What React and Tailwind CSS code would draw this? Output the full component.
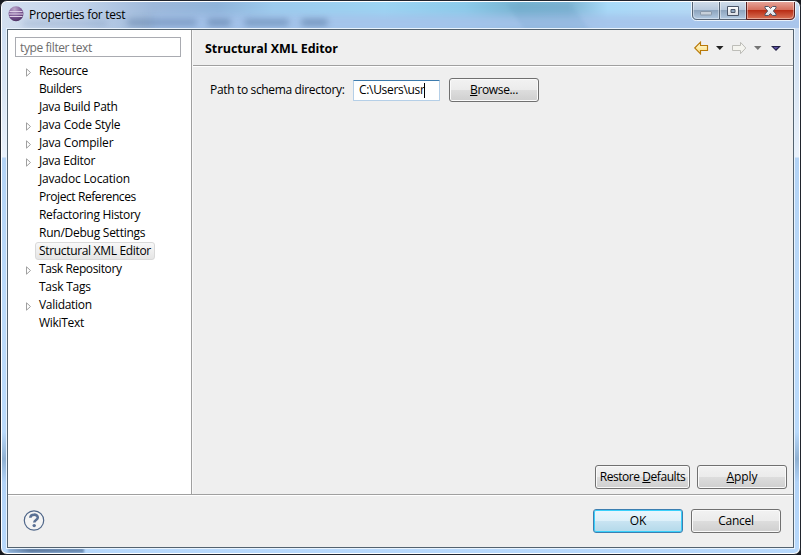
import React from "react";

const treeItems = [
  { label: "Resource", expandable: true, tracking: "tracking-[-0.38px]" },
  { label: "Builders", tracking: "tracking-[-0.4px]" },
  { label: "Java Build Path", tracking: "tracking-[-0.28px]" },
  { label: "Java Code Style", expandable: true, tracking: "tracking-[-0.2px]" },
  { label: "Java Compiler", expandable: true, tracking: "tracking-[-0.17px]" },
  { label: "Java Editor", expandable: true, tracking: "tracking-[-0.28px]" },
  { label: "Javadoc Location", tracking: "tracking-[-0.18px]" },
  { label: "Project References", tracking: "tracking-[-0.42px]" },
  { label: "Refactoring History", tracking: "tracking-[-0.3px]" },
  { label: "Run/Debug Settings", tracking: "tracking-[-0.25px]" },
  { label: "Structural XML Editor", selected: true, tracking: "tracking-[-0.33px]" },
  { label: "Task Repository", expandable: true, tracking: "tracking-[-0.38px]" },
  { label: "Task Tags", tracking: "tracking-[-0.25px]" },
  { label: "Validation", expandable: true, tracking: "tracking-[-0.3px]" },
  { label: "WikiText", tracking: "tracking-[-0.3px]" },
];

function TreeItem({ label, expandable, selected, tracking }) {
  return (
    <li className="flex h-[18px] items-center">
      <span className="flex w-[27px] shrink-0 items-center pl-[17px]">
        {expandable && (
          <svg width="7" height="9" viewBox="0 0 7 9" className="mt-[2px] shrink-0">
            <path d="M1.500 .8v7.400L5.500 4.500z" fill="#fff" stroke="#a0a0a0" />
          </svg>
        )}
      </span>
      <span
        className={
          "flex h-[18px] items-center rounded-[3px] border px-[3px] leading-none whitespace-nowrap " +
          tracking +
          (selected
            ? " w-[120px] border-[#d9d9d9] bg-linear-to-b from-[#f8f8f8] to-[#e5e5e5]"
            : " border-transparent")
        }
      >
        {label}
      </span>
    </li>
  );
}

function Button({ className, primary, children }) {
  return (
    <button
      className={
        "flex h-6 items-center justify-center rounded-[3px] border text-[12px] leading-none whitespace-nowrap " +
        (primary
          ? "border-[#3c7fb1] bg-[linear-gradient(#eaf6fd_0%,#ddf0f9_49%,#c9e4f2_50%,#b3d9ea_100%)] shadow-[inset_0_0_0_1px_#39d0fb] "
          : "border-[#707070] bg-[linear-gradient(#f2f2f2_0%,#ebebeb_49%,#dddddd_50%,#cfcfcf_100%)] shadow-[inset_0_0_0_1px_#fafafa] ") +
        className
      }
    >
      <span>{children}</span>
    </button>
  );
}

function EclipseLogo() {
  return (
    <svg width="16" height="16" viewBox="0 0 16 16">
      <defs>
        <radialGradient id="orb" cx=".4" cy=".2" r=".85">
          <stop offset="0" stopColor="#bba8cb" />
          <stop offset=".6" stopColor="#775390" />
          <stop offset="1" stopColor="#49305f" />
        </radialGradient>
      </defs>
      <circle cx="8" cy="7.800" r="7.500" fill="url(#orb)" />
      <path d="M1.500 5.500h13M.8 8h14.400M1.500 10.500h13" stroke="#ddd0e6" strokeWidth="1" />
    </svg>
  );
}

function TitleBar() {
  return (
    <header className="relative flex h-[26px] shrink-0 justify-between overflow-hidden bg-[linear-gradient(90deg,#d3dfef_0%,#c0d2ea_10%,#9db8da_19%,#8fb4da_27%,#9ccbed_34%,#9cd4f3_48%,#8ccbea_58%,#76b3d0_65%,#7db4d3_71%,#a8daf8_76%,#b3dcf7_84%,#c3d8f0_100%)]">
      <div className="absolute top-[13px] left-[150px] h-[18px] w-[660px] bg-[#a5c2ea]/90 blur-[4px]" />
      <div className="absolute top-[2px] left-[515px] h-[30px] w-[65px] skew-x-[35deg] bg-[#5f91bb]/15 blur-[2px]" />
      <div className="absolute top-[18px] left-[20px] h-[7px] w-[85px] rounded-full bg-[#486a94]/20 blur-[3px]" />
      <div className="absolute top-[17px] left-[125px] h-[7px] w-[70px] rounded-full bg-[#486a94]/40 blur-[3px]" />
      <div className="absolute top-[17px] left-[205px] h-[7px] w-[24px] rounded-full bg-[#486a94]/50 blur-[3px]" />
      <div className="absolute top-[17px] left-[242px] h-[7px] w-[45px] rounded-full bg-[#486a94]/45 blur-[3px]" />
      <div className="absolute top-[17px] left-[299px] h-[7px] w-[27px] rounded-full bg-[#486a94]/50 blur-[3px]" />
      <div className="relative flex items-start pl-[6px]">
        <div className="mt-[4px]">
          <EclipseLogo />
        </div>
        <h1 className="mt-[7px] ml-[5px] text-[12px] leading-[12px] tracking-[-0.28px]">Properties for test</h1>
      </div>
      <svg width="105" height="20" viewBox="0 0 105 20" className="relative -mt-px mr-[3px] shrink-0">
        <defs>
          <linearGradient id="glass" x2="0" y2="1">
            <stop offset="0" stopColor="#d2deeb" />
            <stop offset=".48" stopColor="#b7c8dc" />
            <stop offset=".5" stopColor="#8da4bd" />
            <stop offset="1" stopColor="#b4cbe3" />
          </linearGradient>
          <linearGradient id="close" x2="0" y2="1">
            <stop offset="0" stopColor="#e8aaa0" />
            <stop offset=".48" stopColor="#d56e5c" />
            <stop offset=".5" stopColor="#b92c14" />
            <stop offset="1" stopColor="#db765a" />
          </linearGradient>
          <linearGradient id="glyph" x2="0" y2="1">
            <stop offset="0" stopColor="#fff" />
            <stop offset="1" stopColor="#d8dce2" />
          </linearGradient>
        </defs>
        <path d="M.5 0v14q0 5.500 5 5.500h94q5 0 5-5.500V0" fill="none" stroke="#e9f2fb" />
        <path d="M1.500 0h27v18.500H6q-4.500 0-4.500-4.500z" fill="url(#glass)" stroke="#566475" />
        <path d="M28.500 0h27v18.500h-27z" fill="url(#glass)" stroke="#566475" />
        <path d="M55.500 0h48v14q0 4.500-4.500 4.500H55.500z" fill="url(#close)" stroke="#5a2020" />
        <path d="M2.500 1v13q0 3.500 3.500 3.500h21.500V1M29.500 1v16.500h25V1M56.500 1v16.500h42q4 0 4-3.500V1" fill="none" stroke="#fff" opacity=".4" />
        <rect x="9.500" y="10.500" width="11" height="3.500" rx=".5" fill="#c7d0da" stroke="#8998a9" />
        <path fillRule="evenodd" d="M36.500 5.500h11v9h-11zM40 8.500h4v3h-4z" fill="url(#glyph)" stroke="#4b5669" />
        <path d="M74.500 5.500h3.500l2 2 2-2h3.500v1.500l-2.700 3 2.700 3v1.500H82l-2-2-2 2h-3.500V13l2.700-3-2.700-3z" transform="translate(-.5)" fill="url(#glyph)" stroke="#535666" />
      </svg>
    </header>
  );
}

function ToolbarIcons() {
  return (
    <svg width="90" height="14" viewBox="0 0 90 14">
      <defs>
        <linearGradient id="gold" x2="0" y2="1">
          <stop offset="0" stopColor="#fffbe0" />
          <stop offset="1" stopColor="#fbdc75" />
        </linearGradient>
      </defs>
      <path d="M.7 7 6.500 1.200V4.500h7v5h-7v3.300z" fill="url(#gold)" stroke="#b87908" strokeWidth="1.150" />
      <path d="M22 5h7.500l-3.700 4z" fill="#222" />
      <path d="M51.800 7 46.500 1.300V4.500h-8v5h8v3.200z" fill="#f4f4ef" stroke="#bdbdb8" />
      <path d="M60 5h7.500l-3.700 4z" fill="#747474" />
      <path d="M77 5h10l-5 5z" fill="#222044" />
      <path d="M79.500 6h5l-3 2.500z" fill="#5b50a2" />
    </svg>
  );
}

function HelpIcon() {
  return (
    <svg width="22" height="22" viewBox="0 0 22 22">
      <circle cx="11" cy="10.500" r="9.700" fill="#f4f4f4" stroke="#4f6689" strokeWidth="1.200" />
      <path d="M7.300 7.700C7.500 3.700 14.800 3.700 14.800 7.500c0 2.500-3.500 2.600-3.500 5" fill="none" stroke="#5a7094" strokeWidth="2.600" />
      <circle cx="11.200" cy="15.600" r="1.700" fill="#5a7094" />
    </svg>
  );
}

export default function App() {
  return (
    <div className="h-[555px] w-[801px] overflow-hidden bg-[#17191f] font-['Open_Sans','Noto_Sans',sans-serif] text-[12px] text-black">
      <div className="h-full w-full rounded-[7px] border border-[#20242d] bg-white p-px">
        <div className="relative flex h-full w-full flex-col overflow-hidden rounded-[5px] bg-[linear-gradient(#c9dbf2_0px,#dae6f4_90px,#e9f1fb_155px,#b3d3f5_156px,#bbdafa_300px,#badafb_430px,#8fb0d2_457px,#b2d3f7_480px,#b8d9fc_551px)]">
          <div className="absolute bottom-0 left-[6px] h-[5px] w-[76px] bg-linear-to-r from-[#8eaed3] via-[#5f7ba0] via-30% to-[#6c8cb3] blur-[1px]" />
          <TitleBar />
          <div className="relative flex h-[521px] shrink-0 px-[4px]">
            <div className="flex w-full flex-col border border-[#e9f3fd]">
              <div className="flex h-[519px] w-full flex-col border border-[#53626f] bg-[#efefef]">
                <div className="flex h-[464px] shrink-0">
                  <nav className="w-[184px] shrink-0 border-r border-[#a0a0a0] bg-white">
                    <input
                      readOnly
                      placeholder="type filter text"
                      className="mt-[7px] ml-[7px] block h-[20px] w-[166px] border border-[#a9abb1] px-[4px] text-[12px] tracking-[-0.4px] outline-none placeholder:text-[#6d6d6d]"
                    />
                    <ul className="mt-[5px]">
                      {treeItems.map((item) => (
                        <TreeItem key={item.label} {...item} />
                      ))}
                    </ul>
                  </nav>
                  <main className="flex min-w-0 flex-1 flex-col border-l border-[#f8f8f8]">
                    <div className="flex h-[36px] shrink-0 items-center justify-between border-b border-[#a0a0a0] pr-[9px] pl-[12px]">
                      <h2 className="mt-[4px] text-[12.500px] leading-none font-bold tracking-[-0.08px]">Structural XML Editor</h2>
                      <ToolbarIcons />
                    </div>
                    <div className="flex flex-1 flex-col justify-between border-t border-white">
                      <div className="mt-[11px] flex items-center pl-[17px]">
                        <label className="w-[143px] leading-none tracking-[-0.34px] whitespace-nowrap">Path to schema directory:</label>
                        <div className="flex h-[21px] w-[87px] items-center rounded-[1px] border border-[#b5cfe7] border-t-[#3d7bad] bg-white pl-[5px] leading-none">
                          <span className="tracking-[-0.32px]">C:\Users\usr</span>
                          <span className="h-[15px] w-px bg-black" />
                        </div>
                        <Button className="ml-[9px] w-[90px] tracking-[-0.35px]"><u>B</u>rowse...</Button>
                      </div>
                      <div className="mb-[5px] flex justify-end gap-[7px] pr-[6px]">
                        <Button className="w-[95px] tracking-[-0.45px]">Restore <u>D</u>efaults</Button>
                        <Button className="w-[90px] tracking-[-0.1px]"><u>A</u>pply</Button>
                      </div>
                    </div>
                  </main>
                </div>
                <footer className="flex flex-1 items-center border-t border-[#a0a0a0] shadow-[inset_0_1px_0_#fff]">
                  <div className="ml-[15px] flex-1">
                    <HelpIcon />
                  </div>
                  <Button primary className="w-[90px] tracking-[-0.2px]">OK</Button>
                  <Button className="mr-[12px] ml-[8px] w-[90px] tracking-[-0.25px]">Cancel</Button>
                </footer>
              </div>
            </div>
          </div>
        </div>
      </div>
    </div>
  );
}
